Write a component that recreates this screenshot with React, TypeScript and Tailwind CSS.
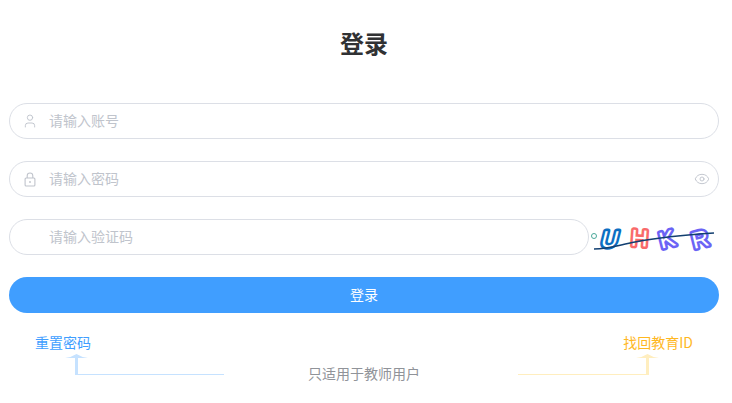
import React from 'react';
import { User, Eye } from 'lucide-react';

const font = "font-['Noto_Sans_CJK_SC','Liberation_Sans',sans-serif]";

function LockIcon() {
  return (
    <svg width="14" height="15" viewBox="0 0 14 15" fill="none" stroke="#c0c4cc" strokeWidth="1.1">
      <rect x="2.1" y="6" width="9.8" height="8" rx="1" />
      <path d="M4.2 6 V3.8 a2.8 2.8 0 0 1 5.6 0 V6" />
      <path d="M7 9 V11" strokeWidth="1.4" />
    </svg>
  );
}

function Field({ icon, placeholder, right, className = '' }: { icon?: React.ReactNode; placeholder: string; right?: React.ReactNode; className?: string }) {
  return (
    <div className={`flex h-9 items-center rounded-[18px] border border-[#dcdfe6] bg-white ${className}`}>
      <span className="flex w-[40px] shrink-0 justify-center">{icon}</span>
      <input
        placeholder={placeholder}
        className="-ml-[1px] h-full min-w-0 flex-1 bg-transparent pb-[2px] text-[14px] outline-none placeholder:text-[#c0c4cc]"
      />
      {right && <span className="mr-[8px] flex">{right}</span>}
    </div>
  );
}

function Captcha() {
  const letters = [
    { c: 'U', x: 19, y: 28, t: 'skewX(-14)', color: '#0b6fc2' },
    { c: 'H', x: 50, y: 27, t: 'rotate(4)', color: '#f96a6a' },
    { c: 'K', x: 80, y: 28, t: 'rotate(-14)', color: '#6b63f5' },
    { c: 'R', x: 113, y: 28, t: 'rotate(-14)', color: '#6b63f5' },
  ];
  return (
    <svg width="130" height="36" viewBox="0 0 130 36" className="shrink-0">
      <circle cx="5" cy="17" r="2.5" fill="none" stroke="#4aa89a" strokeWidth="1" />
      {letters.map((l, i) => (
        <g key={i} transform={`translate(${l.x} ${l.y}) ${l.t}`} fontFamily="'Liberation Sans', sans-serif" fontSize="23" textAnchor="middle">
          <text fill={l.color} stroke={l.color} strokeWidth="5.2" strokeLinejoin="round">
            {l.c}
          </text>
          <text fill="#ffffff">{l.c}</text>
        </g>
      ))}
      <path d="M5 30 C 20 30, 30 26, 46 23 S 80 17, 125 14" fill="none" stroke="#123f70" strokeWidth="1.7" />
    </svg>
  );
}

function Arrow({ color, width, flip }: { color: string; width: number; flip?: boolean }) {
  return (
    <svg width={width} height="21" viewBox={`0 0 ${width} 21`} className={`shrink-0 overflow-visible ${flip ? '-scale-x-100' : ''}`}>
      <path d={`M2 20.5 H${width}`} stroke={color} strokeWidth="1" fill="none" />
      <path d="M2.5 3 V21" stroke={color} strokeWidth="3" fill="none" />
      <path d="M-9 4 Q -3 3.5, 2.5 0 Q 8 3.5, 14 4 Z" fill={color} />
    </svg>
  );
}

export default function App() {
  return (
    <div className={`flex h-[403px] w-[732px] flex-col overflow-hidden bg-white pr-[13px] pl-[9px] ${font}`}>
      <h1 className="mt-[25px] mb-[42px] text-center text-[24px] leading-[36px] font-bold text-[#303133]">登录</h1>

      <Field icon={<User size={16} strokeWidth={1.4} className="text-[#c0c4cc]" />} placeholder="请输入账号" className="mb-[22px]" />
      <Field
        icon={<LockIcon />}
        placeholder="请输入密码"
        right={<Eye size={16} strokeWidth={1.4} className="text-[#c0c4cc]" />}
        className="mb-[22px]"
      />
      <div className="mb-[22px] flex items-center">
        <Field placeholder="请输入验证码" className="w-[580px] shrink-0" />
        <Captcha />
      </div>

      <button className="h-9 rounded-[18px] bg-[#409eff] pb-[2px] text-[14px] text-white">登录</button>

      <div className="mt-[19px] flex justify-between px-[26px] text-[14px] leading-[20px]">
        <span className="text-[#409eff]">重置密码</span>
        <span className="text-[#ffb81f]">找回教育ID</span>
      </div>

      <div className="mt-[2px] flex items-start text-[14px]">
        <span className="ml-[65px] flex">
          <Arrow color="#c6e2ff" width={150} />
        </span>
        <span className="mt-[9px] ml-[84px] leading-[20px] text-[#909399]">只适用于教师用户</span>
        <span className="mr-[69px] ml-auto flex">
          <Arrow color="#ffeebf" width={132} flip />
        </span>
      </div>
    </div>
  );
}
